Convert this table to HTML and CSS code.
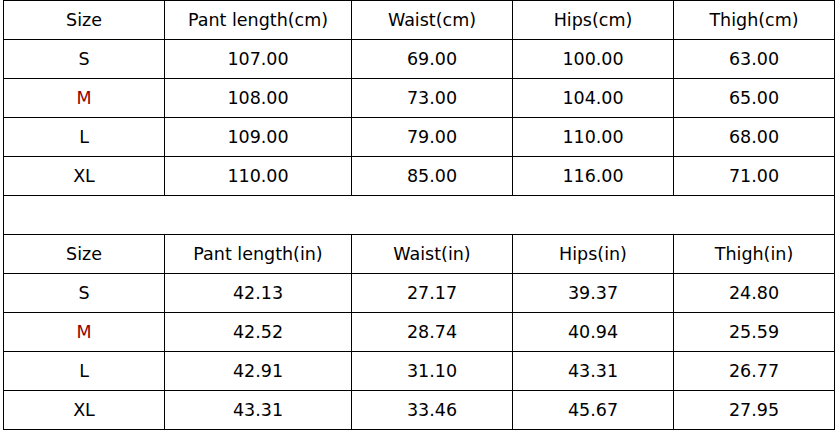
FILE: index.html
```html
<!DOCTYPE html>
<html lang="en">
<head>
    <meta charset="UTF-8">
    <title>Size Chart</title>
    <link rel="stylesheet" href="styles.css">
</head>
<body>

    <table class="size-table">
        <colgroup>
            <col class="col-size">
            <col class="col-length">
            <col class="col-std">
            <col class="col-std">
            <col class="col-std">
        </colgroup>
        <tr>
            <td>Size</td>
            <td>Pant length(cm)</td>
            <td>Waist(cm)</td>
            <td>Hips(cm)</td>
            <td>Thigh(cm)</td>
        </tr>
        <tr>
            <td>S</td>
            <td>107.00</td>
            <td>69.00</td>
            <td>100.00</td>
            <td>63.00</td>
        </tr>
        <tr>
            <td class="size-m">M</td>
            <td>108.00</td>
            <td>73.00</td>
            <td>104.00</td>
            <td>65.00</td>
        </tr>
        <tr>
            <td>L</td>
            <td>109.00</td>
            <td>79.00</td>
            <td>110.00</td>
            <td>68.00</td>
        </tr>
        <tr>
            <td>XL</td>
            <td>110.00</td>
            <td>85.00</td>
            <td>116.00</td>
            <td>71.00</td>
        </tr>
        <!-- linha vazia entre as duas tabelas -->
        <tr>
            <td colspan="5"></td>
        </tr>
        <tr>
            <td>Size</td>
            <td>Pant length(in)</td>
            <td>Waist(in)</td>
            <td>Hips(in)</td>
            <td>Thigh(in)</td>
        </tr>
        <tr>
            <td>S</td>
            <td>42.13</td>
            <td>27.17</td>
            <td>39.37</td>
            <td>24.80</td>
        </tr>
        <tr>
            <td class="size-m">M</td>
            <td>42.52</td>
            <td>28.74</td>
            <td>40.94</td>
            <td>25.59</td>
        </tr>
        <tr>
            <td>L</td>
            <td>42.91</td>
            <td>31.10</td>
            <td>43.31</td>
            <td>26.77</td>
        </tr>
        <tr>
            <td>XL</td>
            <td>43.31</td>
            <td>33.46</td>
            <td>45.67</td>
            <td>27.95</td>
        </tr>
    </table>

</body>
</html>
```

FILE: styles.css
```css
body {
    font-family: "DejaVu Sans", Verdana, sans-serif;
    background-color: #ffffff;
    color: #000000;
    margin: 0;
    padding: 0 3px;
}

.size-table {
    border-collapse: collapse;
    table-layout: fixed;
    width: 831px;
    font-size: 17.5px;
}

.col-size {
    width: 161px;
}

.col-length {
    width: 187px;
}

.col-std {
    width: 161px;
}

.size-table td {
    border: 1px solid #000000;
    height: 38px;
    padding: 0;
    text-align: center;
    vertical-align: middle;
}

.size-m {
    color: #990000;
}
```
